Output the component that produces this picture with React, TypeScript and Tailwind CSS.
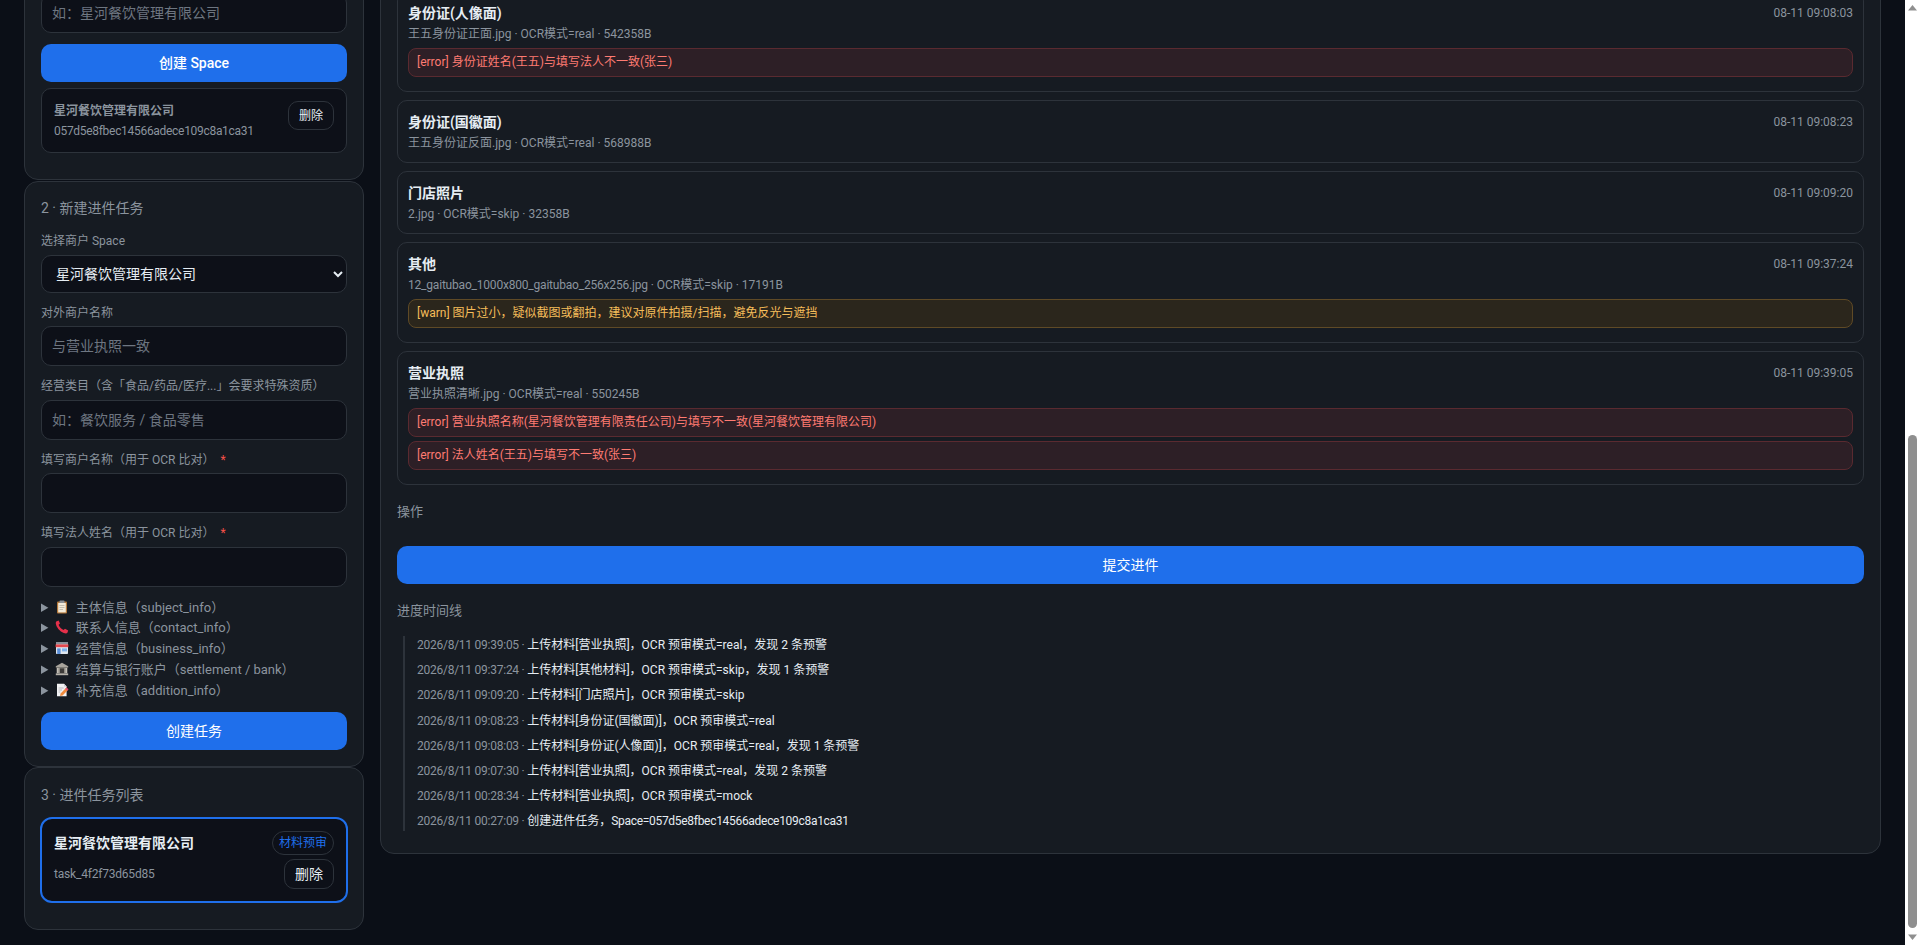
const inputClass =
  "w-full h-10 rounded-[10px] border border-[#2d333b] bg-[#0d1018] px-[10px] text-sm text-[#e6edf3] placeholder:text-[#6e7681] outline-none";

const primaryBtn = "block w-full h-[38px] rounded-[10px] bg-[#1f6feb] text-sm text-white";

const iconClass = "mr-[7px] inline-block align-[-2px]";

const ClipboardIcon = () => (
  <svg width="14" height="14" viewBox="0 0 14 14" className={iconClass}>
    <rect x="2" y="1.5" width="10" height="12" rx="1" fill="#b5793a" />
    <rect x="3.2" y="3" width="7.6" height="9.4" fill="#f3ead9" />
    <rect x="4.5" y="0.5" width="5" height="2.5" rx="0.6" fill="#8b8f94" />
    <path d="M4.5 5.5H9.5M4.5 7.5H9.5M4.5 9.5H8" stroke="#b9b2a4" strokeWidth="0.8" />
  </svg>
);

const PhoneIcon = () => (
  <svg width="14" height="14" viewBox="0 0 14 14" className={iconClass}>
    <path
      d="M1.2 1.6 L3.6 0.6 L5 3.6 L3.6 4.8 C4.2 6.8 6.2 9.2 8.6 10 L10 8.7 L13.2 10.4 L12.4 12.8 C11.8 13.6 10.4 13.6 8.8 13 C4.8 11.6 1.4 7.6 0.8 3.6 C0.7 2.8 0.8 2.2 1.2 1.6 Z"
      fill="#e5304a"
    />
  </svg>
);

const ShopIcon = () => (
  <svg width="14" height="14" viewBox="0 0 14 14" className={iconClass}>
    <rect x="1" y="1" width="12" height="12" rx="0.8" fill="#dfe6ee" />
    <rect x="1" y="1" width="12" height="2.4" fill="#8a8f98" />
    <rect x="0.6" y="3.4" width="12.8" height="2.8" fill="#e5484d" />
    <rect x="2.2" y="7.4" width="3.4" height="5.6" fill="#5b8fd9" />
    <rect x="7" y="7.4" width="5" height="3" fill="#7fb2ea" />
  </svg>
);

const BankIcon = () => (
  <svg width="14" height="14" viewBox="0 0 14 14" className={iconClass}>
    <path d="M7 0.8 L13.2 4.2 V5.4 H0.8 V4.2 Z" fill="#a8a49c" />
    <rect x="1.6" y="5.4" width="10.8" height="6" fill="#8f8b84" />
    <rect x="5" y="6.4" width="4" height="5" fill="#3c3a38" />
    <path d="M2.8 6V11M11.2 6V11" stroke="#d0ccc4" strokeWidth="1.2" />
    <rect x="0.8" y="11.4" width="12.4" height="1.8" fill="#b5b1a9" />
  </svg>
);

const MemoIcon = () => (
  <svg width="14" height="14" viewBox="0 0 14 14" className={iconClass}>
    <path d="M2 0.8 H9 L11.6 3.4 V13.2 H2 Z" fill="#f2f2f4" />
    <path d="M9 0.8 V3.4 H11.6 Z" fill="#c9c9d0" />
    <path d="M3.6 5H8.6M3.6 7H7M3.6 9H5.4" stroke="#a9a9b2" strokeWidth="0.8" />
    <path d="M11.4 4.6 L13.4 6.6 L7.6 12.4 L5 13 L5.6 10.4 Z" fill="#f08a3c" />
    <path d="M11.4 4.6 L13.4 6.6 L12.3 7.7 L10.3 5.7 Z" fill="#e8447a" />
  </svg>
);

const sections = [
  { icon: <ClipboardIcon />, label: "主体信息（subject_info）" },
  { icon: <PhoneIcon />, label: "联系人信息（contact_info）" },
  { icon: <ShopIcon />, label: "经营信息（business_info）" },
  { icon: <BankIcon />, label: "结算与银行账户（settlement / bank）" },
  { icon: <MemoIcon />, label: "补充信息（addition_info）" },
];

interface Material {
  title: string;
  file: string;
  meta: string;
  time: string;
  notes: { level: "error" | "warn"; text: string }[];
}

const materials: Material[] = [
  {
    title: "身份证(人像面)",
    file: "王五身份证正面.jpg",
    meta: " · OCR模式=real · 542358B",
    time: "08-11 09:08:03",
    notes: [{ level: "error", text: "身份证姓名(王五)与填写法人不一致(张三)" }],
  },
  {
    title: "身份证(国徽面)",
    file: "王五身份证反面.jpg",
    meta: " · OCR模式=real · 568988B",
    time: "08-11 09:08:23",
    notes: [],
  },
  {
    title: "门店照片",
    file: "2.jpg",
    meta: " · OCR模式=skip · 32358B",
    time: "08-11 09:09:20",
    notes: [],
  },
  {
    title: "其他",
    file: "12_gaitubao_1000x800_gaitubao_256x256.jpg",
    meta: " · OCR模式=skip · 17191B",
    time: "08-11 09:37:24",
    notes: [{ level: "warn", text: "图片过小，疑似截图或翻拍，建议对原件拍摄/扫描，避免反光与遮挡" }],
  },
  {
    title: "营业执照",
    file: "营业执照清晰.jpg",
    meta: " · OCR模式=real · 550245B",
    time: "08-11 09:39:05",
    notes: [
      { level: "error", text: "营业执照名称(星河餐饮管理有限责任公司)与填写不一致(星河餐饮管理有限公司)" },
      { level: "error", text: "法人姓名(王五)与填写不一致(张三)" },
    ],
  },
];

const timeline = [
  ["2026/8/11 09:39:05", "上传材料[营业执照]，OCR 预审模式=real，发现 2 条预警"],
  ["2026/8/11 09:37:24", "上传材料[其他材料]，OCR 预审模式=skip，发现 1 条预警"],
  ["2026/8/11 09:09:20", "上传材料[门店照片]，OCR 预审模式=skip"],
  ["2026/8/11 09:08:23", "上传材料[身份证(国徽面)]，OCR 预审模式=real"],
  ["2026/8/11 09:08:03", "上传材料[身份证(人像面)]，OCR 预审模式=real，发现 1 条预警"],
  ["2026/8/11 09:07:30", "上传材料[营业执照]，OCR 预审模式=real，发现 2 条预警"],
  ["2026/8/11 00:28:34", "上传材料[营业执照]，OCR 预审模式=mock"],
];

const Field = ({
  label,
  placeholder,
  required,
}: {
  label: string;
  placeholder?: string;
  required?: boolean;
}) => (
  <div className="mb-[11px]">
    <div className="mb-[5.5px] pt-px text-xs leading-4 text-[#8b949e]">
      {label}
      {required && <span className="ml-[6px] text-[#f85149]">*</span>}
    </div>
    <input className={inputClass} placeholder={placeholder} />
  </div>
);

const MaterialCard = ({ item }: { item: Material }) => (
  <div className="rounded-[10px] border border-[#2d333b] bg-[#161b22] px-[10px] pb-[10px] pt-[11px]">
    <div className="flex justify-between">
      <div className="text-sm font-semibold leading-5 text-[#e6edf3]">{item.title}</div>
      <div className="text-xs leading-5 text-[#8b949e]">{item.time}</div>
    </div>
    <div className="mt-[3px] text-xs leading-[17px] text-[#8b949e]">
      <span className={item.file.startsWith("12_") ? "tracking-[-0.2px]" : ""}>{item.file}</span>
      {item.meta}
    </div>
    {item.notes.length > 0 && (
      <div className="mb-[4.5px] mt-[4.5px] flex flex-col gap-1">
        {item.notes.map((n) => (
          <div
            key={n.text}
            className={
              n.level === "error"
                ? "rounded-lg border border-[#5a2a30] bg-[#2d1f26] px-2 py-[6px] text-xs leading-[15px] text-[#ff7b72]"
                : "rounded-lg border border-[#5f4a26] bg-[#2b261c] px-2 py-[6px] text-xs leading-[15px] text-[#f5bd5a]"
            }
          >
            [{n.level}] {n.text}
          </div>
        ))}
      </div>
    )}
  </div>
);

export default function App() {
  return (
    <div
      className="flex h-screen overflow-hidden bg-[#0b0f17] text-[#e6edf3]"
      style={{ fontFamily: 'Roboto, "Noto Sans CJK SC", sans-serif' }}
    >
      <div className="flex min-w-0 flex-1 items-start gap-4 px-6">
        <aside className="-mt-5 w-[340px] shrink-0">
          <div className="rounded-[14px] border border-[#2d333b] bg-[#161b22] px-4 pb-[26px] pt-3">
            <input className={inputClass} placeholder="如：星河餐饮管理有限公司" />
            <button className={`${primaryBtn} mt-[11px] font-medium`}>创建 Space</button>
            <div className="mt-[6px] flex items-start justify-between rounded-[10px] border border-[#2d333b] bg-[#0d1018] p-3">
              <div className="pt-px">
                <div className="text-xs font-semibold leading-[18px] text-[#8b949e]">星河餐饮管理有限公司</div>
                <div className="mt-[2px] text-xs leading-[18px] tracking-[-0.3px] text-[#8b949e]">
                  057d5e8fbec14566adece109c8a1ca31
                </div>
              </div>
              <button className="h-[29px] w-[46px] rounded-[10px] border border-[#2d333b] text-xs text-[#e6edf3]">
                删除
              </button>
            </div>
          </div>

          <div className="mt-px rounded-[14px] border border-[#2d333b] bg-[#161b22] p-4">
            <div className="mb-[14px] text-sm leading-5 text-[#8b949e]">2 · 新建进件任务</div>
            <div className="mb-[11px]">
              <div className="mb-[5.5px] pt-px text-xs leading-4 text-[#8b949e]">选择商户 Space</div>
              <select className="h-[38px] w-full rounded-[10px] border border-[#2d333b] bg-[#0d1018] px-[10px] text-sm text-[#e6edf3] outline-none">
                <option>星河餐饮管理有限公司</option>
              </select>
            </div>
            <Field label="对外商户名称" placeholder="与营业执照一致" />
            <Field label="经营类目（含「食品/药品/医疗...」会要求特殊资质）" placeholder="如：餐饮服务 / 食品零售" />
            <Field label="填写商户名称（用于 OCR 比对）" required />
            <Field label="填写法人姓名（用于 OCR 比对）" required />
            {sections.map((s) => (
              <details key={s.label} className="text-[13px] leading-[20.8px] text-[#8b949e]">
                <summary>
                  {s.icon}
                  {s.label}
                </summary>
              </details>
            ))}
            <button className={`${primaryBtn} mt-[10.5px]`}>创建任务</button>
          </div>

          <div className="rounded-[14px] border border-[#2d333b] bg-[#161b22] px-4 pb-[26px] pt-[17px]">
            <div className="mb-3 text-sm leading-5 text-[#8b949e]">3 · 进件任务列表</div>
            <div className="-mx-px rounded-xl border-2 border-[#1f6feb] bg-[#0d1018] p-3">
              <div className="flex items-center justify-between">
                <div className="text-sm font-semibold text-[#e6edf3]">星河餐饮管理有限公司</div>
                <span className="flex h-6 w-[62px] items-center justify-center rounded-full border border-[#2d333b] text-xs text-[#1f6feb]">
                  材料预审
                </span>
              </div>
              <div className="mt-1 flex items-center justify-between">
                <div className="text-xs tracking-[-0.2px] text-[#8b949e]">task_4f2f73d65d85</div>
                <button className="h-[30px] w-[50px] rounded-[10px] border border-[#2d333b] text-sm text-[#e6edf3]">
                  删除
                </button>
              </div>
            </div>
          </div>
        </aside>

        <main className="-mt-[30px] min-w-0 flex-1 rounded-[14px] border border-[#2d333b] bg-[#161b22] px-4 pb-[22px] pt-5">
          <div className="flex flex-col gap-2">
            {materials.map((m) => (
              <MaterialCard key={m.time} item={m} />
            ))}
          </div>
          <div className="mt-[17px] text-[13px] leading-5 text-[#8b949e]">操作</div>
          <button className={`${primaryBtn} mt-[24px]`}>提交进件</button>
          <div className="mt-[17px] text-[13px] leading-5 text-[#8b949e]">进度时间线</div>
          <div className="ml-[6px] mt-[15px] flex flex-col gap-[6.2px] border-l-2 border-[#2d333b] pl-3 text-xs leading-[19px]">
            {timeline.map(([time, text]) => (
              <div key={time}>
                <span className="tracking-[-0.25px] text-[#8b949e]">{time} · </span>
                <span className="text-[#e6edf3]">{text}</span>
              </div>
            ))}
            <div>
              <span className="tracking-[-0.25px] text-[#8b949e]">2026/8/11 00:27:09 · </span>
              <span className="text-[#e6edf3]">
                创建进件任务，<span className="tracking-[-0.3px]">Space=057d5e8fbec14566adece109c8a1ca31</span>
              </span>
            </div>
          </div>
        </main>
      </div>

      {/* browser scrollbar, the page is shot scrolled to the bottom */}
      <div className="flex w-[15px] shrink-0 flex-col items-center bg-white">
        <svg width="15" height="17" viewBox="0 0 15 17" className="shrink-0">
          <path d="M7.5 5 L12 10.5 H3 Z" fill="#8f8f8f" />
        </svg>
        <div className="mt-[418px] w-[9px] flex-1 rounded-full bg-[#8f8f8f]" />
        <svg width="15" height="17" viewBox="0 0 15 17" className="shrink-0">
          <path d="M7.5 12 L12 6.5 H3 Z" fill="#8f8f8f" />
        </svg>
      </div>
    </div>
  );
}
